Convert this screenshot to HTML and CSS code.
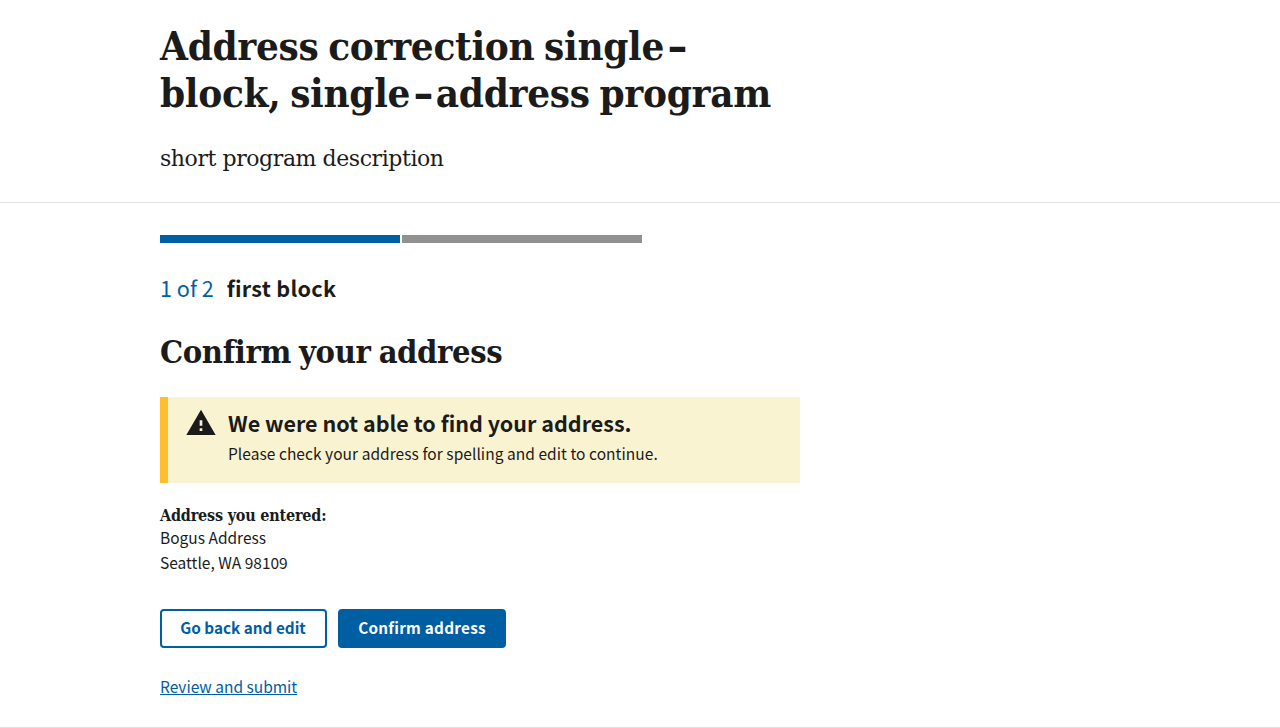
FILE: index.html
```html
<!DOCTYPE html>
<html lang="en">
<head>
<meta charset="utf-8">
<title>Confirm your address</title>
<link rel="stylesheet" href="styles.css">
</head>
<body>
<header class="program-header">
  <h1 class="program-title">Address correction single<span class="hyphen">-</span><br>block, single<span class="hyphen">-</span>address program</h1>
  <p class="program-description">short program description</p>
</header>
<main class="content">
  <div class="progress">
    <div class="segment segment-current"></div>
    <div class="segment"></div>
  </div>
  <h2 class="step"><span class="step-count">1 of 2</span><span class="step-name">first block</span></h2>
  <h2 class="page-heading">Confirm your address</h2>
  <section class="alert">
    <svg class="alert-icon" viewBox="0 0 32 32" aria-hidden="true"><path fill="#1b1b1b" d="M1.333 28h29.334L16 2.667zM17.333 24h-2.666v-2.667h2.666zm0-5.333h-2.666v-5.334h2.666z"/></svg>
    <div class="alert-body">
      <h3 class="alert-heading">We were not able to find your address.</h3>
      <p class="alert-text">Please check your address for spelling and edit to continue.</p>
    </div>
  </section>
  <h3 class="address-label">Address you entered:</h3>
  <p class="address">Bogus Address<br>Seattle, WA 98109</p>
  <div class="actions">
    <button class="button button-outline">Go back and edit</button>
    <button class="button button-primary">Confirm address</button>
  </div>
  <a class="review-link" href="#">Review and submit</a>
</main>
<footer class="footer"></footer>
</body>
</html>
```
FILE: styles.css
```css
* { box-sizing: border-box; }
body {
  margin: 0;
  background: #fff;
  color: #1b1b1b;
  font-family: "Noto Sans CJK SC", sans-serif;
  font-size: 15.5px;
  line-height: 25px;
}
h1, h2, h3, p { margin: 0; }
.program-header {
  height: 203px;
  padding: 22px 160px 0;
  border-bottom: 1px solid #dfe1e2;
}
.program-title, .page-heading, .address-label {
  font-family: "DejaVu Serif Condensed", "DejaVu Serif", serif;
  font-stretch: condensed;
  white-space: nowrap;
}
.program-title {
  font-size: 40px;
  line-height: 47px;
  letter-spacing: -0.3px;
  word-spacing: -2.5px;
}
.hyphen {
  display: inline-block;
  margin: 0 5px 0 6px;
  transform: scaleX(1.4);
}
.program-description {
  margin-top: 25px;
  font-family: "DejaVu Serif", serif;
  font-size: 22px;
  line-height: 36px;
  letter-spacing: -0.42px;
}
.content {
  display: flex;
  flex-direction: column;
  align-items: flex-start;
  height: 524px;
  padding: 32px 160px 0;
}
.progress { display: flex; gap: 2px; }
.segment { width: 240px; height: 8px; background: #919191; }
.segment-current { background: #005ea2; }
.step {
  display: flex;
  gap: 13px;
  margin-top: 27px;
  font-size: 21.6px;
  line-height: 36px;
}
.step-count { color: #005ea2; font-weight: 400; }
.step-name { letter-spacing: 0.25px; }
.page-heading {
  margin-top: 25px;
  font-size: 32.4px;
  line-height: 42px;
  letter-spacing: -0.4px;
  word-spacing: -1.5px;
}
.alert {
  display: flex;
  gap: 11px;
  width: 640px;
  height: 86px;
  margin-top: 24px;
  padding: 9px 17px;
  border-left: 8px solid #ffbe2e;
  background: #faf3d1;
}
.alert-icon { width: 32px; height: 32px; margin-top: 1px; }
.alert-heading { font-size: 21.5px; line-height: 34px; white-space: nowrap; }
.alert-text { margin-top: 1px; letter-spacing: 0.05px; line-height: 25px; white-space: nowrap; }
.address-label { margin-top: 21px; font-size: 16px; line-height: 24px; letter-spacing: -0.2px; }
.address { margin-top: -3px; line-height: 25px; }
.actions { display: flex; gap: 11px; margin-top: 34px; }
.button {
  height: 39px;
  padding: 0 0 4px;
  border: 2px solid #005ea2;
  border-radius: 4px;
  font-family: inherit;
  font-size: 15.3px;
  font-weight: 700;
  line-height: 20px;
}
.button-outline { width: 167px; padding-right: 1px; background: #fff; color: #005ea2; }
.button-primary { width: 168px; background: #005ea2; color: #fff; letter-spacing: 0.25px; }
.review-link { margin-top: 26px; color: #005ea2; text-underline-offset: 1px; }
.footer { height: 1px; background: #dfe1e2; }
```
